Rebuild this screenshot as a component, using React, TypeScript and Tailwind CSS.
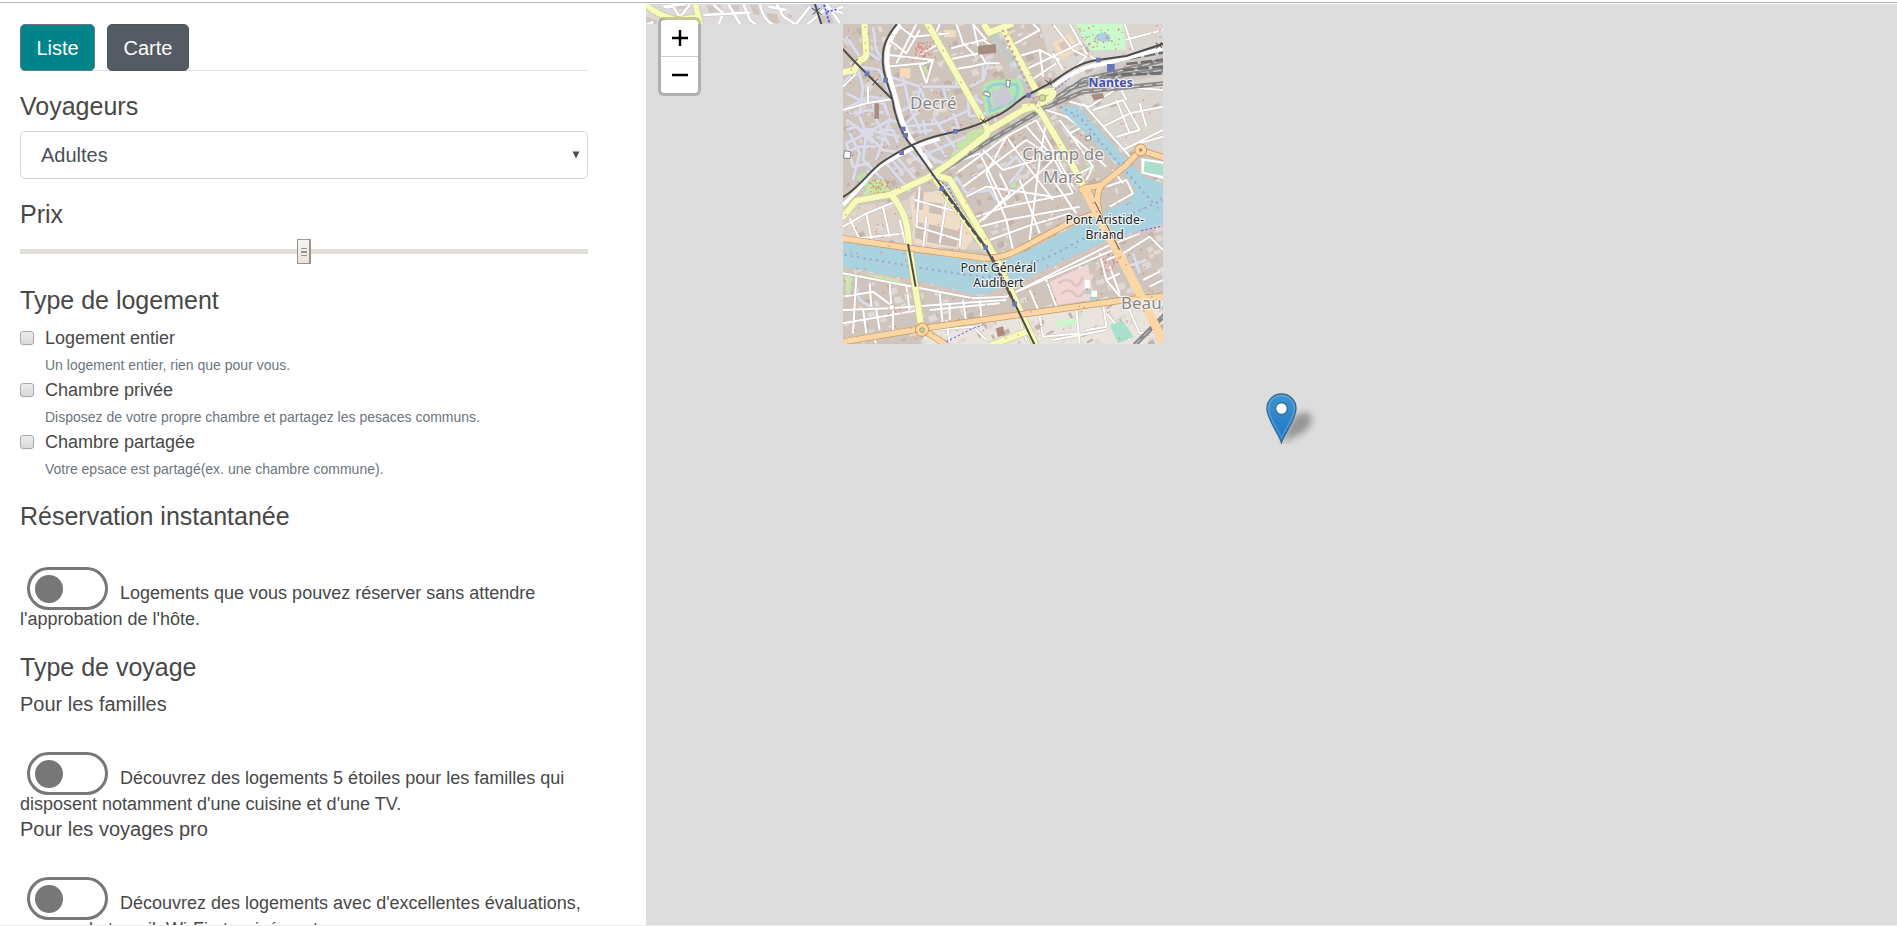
import { useState, type ReactNode } from "react";

type Point = [number, number];

const lodgingTypes = [
  { id: "entier", label: "Logement entier", help: "Un logement entier, rien que pour vous." },
  {
    id: "privee",
    label: "Chambre privée",
    help: "Disposez de votre propre chambre et partagez les pesaces communs.",
  },
  {
    id: "partagee",
    label: "Chambre partagée",
    help: "Votre epsace est partagé(ex. une chambre commune).",
  },
];

function SectionTitle({ children }: { children: ReactNode }) {
  return <h2 className="text-[25px] leading-[30px]">{children}</h2>;
}

function Toggle({ id, children }: { id: string; children: ReactNode }) {
  return (
    <p className="pt-9 text-lg/[26px]">
      <input
        id={id}
        type="checkbox"
        role="switch"
        className="mr-3 -mb-1 ml-[7px] inline-block h-[43px] w-[81px] appearance-none rounded-full border-3 border-[#777] bg-white p-[5px] align-[-7px] before:block before:size-7 before:rounded-full before:bg-[#777] checked:before:ml-auto"
      />
      <label htmlFor={id}>{children}</label>
    </p>
  );
}

/* ---------- Map drawing ---------- */

function seeded(seed: number) {
  let s = seed;
  return () => {
    s = (s * 16807) % 2147483647;
    return s / 2147483647;
  };
}

const random = seeded(4242);
const scatter = (n: number): Point[] =>
  Array.from({ length: n }, () => [10 + random() * 960, 12 + random() * 960]);

const courtyards = scatter(620);
const trees = scatter(300);

const oldTownStreets = [
  "M10,190 L60,140 L120,150 L160,240 L90,230 L10,270",
  "M50,130 L70,200 L60,290 L80,340 L70,420 L130,480",
  "M20,300 L80,340 L150,300 L190,310 M80,340 L20,370 L40,440 L90,430",
  "M80,340 L130,390 L200,400 M100,250 L110,300 L150,380 M130,240 L150,300 L110,420",
  "M10,400 L60,380 L110,380 M30,340 L60,400 L40,480 M90,330 L180,350",
  "M150,170 L240,200 L230,280 L190,320 M240,200 L380,200 L390,290",
  "M190,320 L300,310 L390,270 M210,260 L240,330 M280,290 L320,350 M340,280 L360,330",
  "M240,200 L260,250 M190,170 L210,260 L170,280 M310,200 L320,240 M350,200 L350,160",
  "M200,390 L260,440 M240,370 L290,430 M280,360 L320,410 M320,350 L360,400",
  "M220,420 L380,350 M250,400 L330,440 M140,430 L200,500 M170,410 L230,480",
  "M390,200 L430,180 L430,130 M390,290 L440,280 M400,230 L430,250",
  "M20,50 L60,110 M100,20 L110,90 L150,150 M90,100 L120,120",
  "M350,470 L380,520 L450,510 L470,540 M490,450 L530,410 L550,440 L510,490",
  "M290,500 L340,500 L350,470 M50,800 L60,840 L110,870 M40,720 L100,760",
  "M880,700 L900,760 M860,740 L920,720 M450,120 L430,180",
  "M20,220 L60,240 L130,250 M30,280 L90,270 L140,280 M20,330 L50,320 L100,370 M120,330 L160,330 L175,370",
  "M150,410 L190,460 M110,350 L140,360 M200,340 L280,330 M250,300 L260,345 M160,200 L200,190",
];

const streets = [
  "M150,60 L200,100 L240,30 M150,105 L280,120 L260,190 M170,12 L220,50 L330,40 M230,12 L170,130 M140,140 L250,130",
  "M280,120 L240,135 L260,190 M300,70 L230,110 M280,60 L300,12 M320,120 L420,100 L400,12 M350,12 L370,70 L410,110",
  "M335,85 L430,60 L460,80 M420,100 L440,130 L390,140 L330,150 M350,150 L370,200 M440,130 L480,130",
  "M10,270 L80,250 L155,238 M10,200 L50,160 M85,200 L85,250 M400,12 L440,60",
  "M500,85 L600,30 M530,110 L600,90 L660,120 M555,150 L680,90 L720,70 M600,90 L610,170 M640,100 L670,150 M575,180 L650,130",
  "M640,12 L700,90 L740,110 M690,12 L740,100 L770,120 M740,110 L700,150 M855,12 L880,90 M600,30 L580,12 M855,60 L970,30",
  "M350,460 L500,350 L590,300 M370,500 L560,360 L650,420 M340,430 L420,400 L500,560 M400,620 L620,440 L660,400",
  "M430,390 L490,450 L590,420 M500,350 L550,420 L640,540 M560,320 L640,410 L700,520 M500,350 L440,460 L500,600 L520,690",
  "M620,300 L600,420 L570,660 M380,530 L440,500 L640,530 M410,590 L500,560 L700,520 M420,620 L500,600 L720,560",
  "M450,660 L560,620 L690,580 M540,480 L600,640 M590,300 L700,500 M640,480 L710,580 M480,460 L510,520 L430,600",
  "M660,300 L690,340 L760,440 L700,470 M690,340 L730,320 M620,270 L680,290 L760,350 L830,430 M700,350 L800,440",
  "M730,250 L800,330 L880,420 M760,270 L850,240 L900,330 L830,350 M790,320 L870,280 L970,260 M850,390 L970,330 M900,370 L970,350",
  "M690,245 L750,260 L840,200 L970,210 M830,240 L870,340 M900,250 L920,320 M840,200 L860,240",
  "M10,620 L80,580 L180,540 M30,595 L60,660 M80,580 L100,680 M130,560 L150,650 M60,655 L200,640 M180,600 L200,680",
  "M240,500 L230,620 L360,660 M225,540 L370,580 M260,590 L250,690 M320,540 L300,670 M370,580 L360,680",
  "M10,760 L220,800 L400,835 L500,830 L800,680 L900,640 M10,830 L100,815 L160,860 L160,940 M10,910 L240,870",
  "M10,870 L150,865 L420,845 L500,840 M150,790 L155,860 M50,770 L40,940 M90,790 L95,860 M110,870 L120,930 M200,800 L210,870",
  "M300,820 L310,920 M270,870 L480,850 M420,840 L425,890 M330,850 L330,900 M370,840 L380,910 M70,865 L80,940",
  "M570,810 L600,880 M520,820 L820,690 M620,780 L650,860 M720,740 L760,850 M780,700 L800,780 L850,840 M800,780 L840,760",
  "M800,720 L850,700 L890,790 M850,700 L930,650 L970,690 M930,800 L970,780 M910,780 L970,750 M810,740 L840,820",
  "M540,900 L560,960 M600,890 L610,950 L720,940 M710,870 L720,970 M790,850 L800,920 L740,930 M800,880 L870,960 M640,960 L800,930",
  "M280,930 L400,920 L440,960 M320,900 L330,970 M100,950 L110,970 M860,850 L900,940 L960,930",
  "M800,500 L860,480 L880,520 L810,560 M820,450 L850,490 M740,480 L760,440",
];

const yellowRoads = [
  "M74,8 L80,100 Q80,118 60,120 L45,150 L6,158",
  "M262,8 L440,318 L445,335",
  "M432,12 L448,38 L520,10",
  "M6,595 L50,542 L155,523 L270,470 L340,422 L440,345 L445,332 L550,270 L600,255",
  "M155,523 C190,570 205,600 208,680 L245,922",
  "M272,462 L330,478 L472,720 L590,980",
  "M285,475 L440,690",
  "M548,262 Q592,252 606,280 L690,420 L735,505",
  "M485,20 L590,212",
  "M595,218 L640,212 Q645,235 600,250",
  "M448,978 L562,935",
];

const orangeRoads = [
  "M6,655 L240,689 L430,714 C480,718 520,700 570,672 L690,608 L775,578",
  "M720,512 L740,502 L795,622 L900,820 L975,975",
  "M735,505 L785,495 L855,440 L903,390 L975,414",
  "M785,495 C765,530 775,560 782,590",
  "M6,966 L245,926 L540,884 L840,842 L975,828",
  "M245,926 L325,978",
];

const trainLines = [
  "M172,12 C130,60 124,100 132,150 C142,200 158,220 162,260 C176,320 196,360 222,382 L300,492 L437,680 L525,850 L585,975",
  "M8,532 C60,505 90,450 130,425 C180,392 240,360 300,346 C350,335 420,315 460,292 C510,275 530,240 570,222 L640,185 C700,140 740,122 790,118 L860,108 L975,70",
  "M8,86 L46,126 L106,186 L158,238",
  "M205,672 L228,800",
];

const mainRail = [
  "M300,455 L440,368 L590,278",
  "M590,278 L690,205 L850,165 L975,150",
  "M600,272 L730,180 L975,120",
  "M620,262 L730,215 L975,190",
  "M885,975 L975,885",
];

const stops: Point[] = [
  [82, 161], [138, 181], [191, 327], [198, 346], [186, 398], [347, 334],
  [567, 226], [776, 120], [306, 506], [438, 683], [525, 852],
];

const crossings: Point[] = [[46, 126], [106, 186], [430, 303], [627, 188], [958, 76]];

const mapLabels = [
  { text: "Decré", x: 281, y: 266, size: 51, fill: "#868686" },
  { text: "Champ de", x: 670, y: 420, size: 51, fill: "#868686" },
  { text: "Mars", x: 670, y: 488, size: 51, fill: "#868686" },
  { text: "Pont Aristide-", x: 795, y: 613, size: 37, fill: "#252525" },
  { text: "Briand", x: 795, y: 658, size: 37, fill: "#252525" },
  { text: "Pont Général", x: 476, y: 755, size: 37, fill: "#252525" },
  { text: "Audibert", x: 476, y: 800, size: 37, fill: "#252525" },
  { text: "Beau", x: 905, y: 867, size: 51, fill: "#868686" },
];

function Lines({ paths, color, width, dash }: { paths: string[]; color: string; width: number; dash?: string }) {
  return (
    <g fill="none" stroke={color} strokeWidth={width} strokeDasharray={dash} strokeLinejoin="round">
      {paths.map((d) => (
        <path key={d} d={d} />
      ))}
    </g>
  );
}

function CityTile() {
  return (
    <svg viewBox="10 12 960 960" className="absolute top-5 left-[197px] size-80" role="img" aria-label="Nantes">
      <rect x="10" y="12" width="960" height="960" fill="#d0c5bd" />
      <path d="M600,12 L970,12 L970,400 L860,400 L640,150 Z" fill="#dcd6d1" />
      <path d="M250,930 L970,830 L970,972 L250,972 Z" fill="#e9e4dd" />
      <path d="M10,560 L200,540 L240,500 L430,690 L240,680 L10,650 Z" fill="#dcd2ca" />
      <g>
        {courtyards.map(([x, y], i) => (
          <rect
            key={i}
            x={x}
            y={y}
            width={8 + (i % 5) * 4}
            height={6 + (i % 4) * 4}
            transform={`rotate(${-28 + (i % 3) * 4} ${x} ${y})`}
            fill={i % 3 ? "#e0dad6" : "#c1b4aa"}
          />
        ))}
      </g>

      <path d="M212,530 L300,510 L405,650 L375,690 L225,670 Z" fill="#f0ddc9" />
      <path d="M228,510 L252,510 L250,570 L225,568 Z M228,605 L252,610 L250,660 L226,655 Z M268,612 L362,634 L350,682 L262,666 Z M270,545 L310,552 L305,585 L268,578 Z" fill="#cdbfb5" />
      <path d="M640,70 L690,40 L715,85 L665,120 Z" fill="#f4dcc0" />
      <path d="M655,72 L682,56 L700,84 L672,100 Z" fill="#d8c7b8" />
      <path d="M180,145 h32 v30 h-32 z M312,30 h36 v22 h-36 z" fill="#f6dcb8" />

      <path d="M708,12 L852,12 L858,88 L750,92 Z" fill="#c8facc" />
      <path d="M765,52 q20,-24 42,-8 q14,16 -6,22 q-20,4 -36,-14z" fill="#aad3df" />
      <path d="M430,200 q10,-24 50,-20 l60,-4 q18,24 10,50 l-50,40 l-60,24 q-12,-40 -10,-90z" fill="#b4e6b0" />
      <path d="M442,210 q10,-18 40,-18 l50,2 q8,20 -10,50 l-70,30 z" fill="none" stroke="#9bcfd5" strokeWidth="9" />
      <path d="M345,380 Q400,310 445,330 L430,360 L330,420 Z M85,490 L130,470 L150,512 L75,525 Z" fill="#c6e6a9" />
      <path d="M50,470 l25,-12 l20,24 l-20,20z M240,145 l20,-6 l8,18 l-18,8z M510,480 l16,2 l4,18 l-16,4z M735,430 l10,-8 l24,30 l-8,6z" fill="#bfe3b0" />
      <path d="M15,765 L35,765 L32,830 L20,830 Z M60,755 L150,770 L220,800 L150,790 Z" fill="#cbe6b0" />

      <Lines paths={oldTownStreets} color="#c0bdca" width={12} />
      <Lines paths={oldTownStreets} color="#dcdbe8" width={9} />
      <path d="M70,325 l28,0 l4,22 l-26,10 l-12,-16z" fill="#dcdbe8" />
      <Lines paths={streets} color="#c4bdb8" width={9} />
      <Lines paths={streets} color="#ffffff" width={6} />

      <path d="M414,78 L468,72 L470,98 L416,104 Z M104,250 h14 v46 h-14 z M755,225 l34,-6 l5,16 l-32,6 z M470,925 l20,-6 l6,26 l-22,6 z" fill="#a68d80" />
      <path d="M455,208 l18,6 l8,-14 l20,-2 l8,20 l14,14 l-16,12 l-6,16 l-22,-4 l-12,10 l-8,-22 z" fill="#cacad6" />
      <path d="M630,785 L745,733 L764,838 L654,855 Z" fill="#f1d6d5" />
      <path d="M655,790 q30,-20 45,0 t30,-20 M664,822 q26,-20 40,0 t30,-10" fill="none" stroke="#dcc4c0" strokeWidth="7" />
      <path d="M735,780 h16 v25 h-16 z M756,812 h16 v20 h-16 z" fill="#fff" />
      <path d="M736,806 h18 v16 h-18 z M750,830 h20 v14 h-20z" fill="#a8d5cf" />
      <path d="M810,915 L850,903 L882,950 L835,970 Z" fill="#aae0cb" />
      <path d="M648,904 L710,898 L710,914 L650,918 Z" fill="#c8facc" />

      <path
        d="M10,665 L240,700 L430,725 L492,722 L580,685 L760,592 L870,540 L890,510 L840,440 L680,285 L655,258 L715,258 L870,430 L912,468 L970,492 L970,612 L800,662 L560,775 L440,822 L410,825 L220,778 L10,742 Z"
        fill="#aad3df"
      />
      <path d="M905,415 L975,425 L975,478 L905,460 Z" fill="#fff" />
      <path d="M915,422 L970,432 L970,468 L912,456 Z" fill="#aae0cb" />
      <path d="M10,748 L220,785 L400,825 L450,826 L560,782 L800,668 L970,618" fill="none" stroke="#e8c3bd" strokeWidth="4" strokeDasharray="8 5" />
      <path d="M15,705 L240,743 L430,772 L490,762 L640,705 L790,625 L880,580 L970,540 M660,260 L720,290 L820,410 L940,548" fill="none" stroke="#a99bd0" strokeWidth="6" strokeDasharray="6 13" />
      <path d="M455,45 L560,205 M470,40 L575,200" fill="none" stroke="#a6d7e3" strokeWidth="5" strokeDasharray="16 6" />

      <path d="M850,110 L970,85 L970,165 L720,215 L650,245 L740,170 Z" fill="#c9c5c2" opacity=".7" />
      <Lines paths={mainRail} color="#8a8a8a" width={14} />
      <Lines paths={mainRail} color="#dcdcdc" width={3} dash="24 14" />
      <path d="M870,115 L970,98 M860,132 L970,120 M850,150 L970,140 M800,165 L970,160" fill="none" stroke="#6f6f6f" strokeWidth="8" strokeDasharray="34 10" />

      <path d="M182,14 C142,60 138,100 145,150 C155,200 170,230 176,265 C190,320 210,360 236,385 L275,445" fill="none" stroke="#fff" strokeWidth="14" />
      <path d="M10,555 C70,500 90,455 130,432 C180,402 240,372 300,356 M640,200 C700,155 740,138 800,130 L970,86" fill="none" stroke="#fff" strokeWidth="12" />

      <Lines paths={yellowRoads} color="#c9cc8f" width={22} />
      <Lines paths={yellowRoads} color="#f6fabb" width={18} />
      <Lines paths={orangeRoads} color="#c89a5c" width={20} />
      <Lines paths={orangeRoads} color="#fcd6a4" width={16} />
      <path d="M735,505 L795,622 L900,820 L975,975" fill="none" stroke="#fcd6a4" strokeWidth="26" />
      <circle cx="247" cy="929" r="20" fill="#fcd6a4" stroke="#c89a5c" strokeWidth="3" />
      <circle cx="247" cy="930" r="7" fill="#b9dd9d" stroke="#a47a3e" strokeWidth="2" />
      <circle cx="903" cy="390" r="18" fill="#fcd6a4" stroke="#c89a5c" strokeWidth="3" />
      <circle cx="903" cy="390" r="5" fill="#b08b50" />
      <circle cx="608" cy="234" r="10" fill="#c8d9a0" stroke="#a9ab62" strokeWidth="3" />
      <circle cx="156" cy="862" r="9" fill="#fff" stroke="#bbb" strokeWidth="3" />

      <path d="M488,30 L596,265" fill="none" stroke="#c99bb4" strokeWidth="7" strokeDasharray="7 10" />
      <Lines paths={trainLines} color="#4c4c4c" width={6} />
      <path d="M310,510 L436,680 M455,710 L525,850" fill="none" stroke="#555" strokeWidth="9" strokeDasharray="22 7" />
      <path d="M765,545 L840,690" fill="none" stroke="#555" strokeWidth="3" />
      <path d="M275,465 L325,500 L370,590 M320,965 L400,925 L430,915 M905,632 L970,618 M645,210 L690,175" fill="none" stroke="#4a4aff" strokeWidth="3" strokeDasharray="6 7" />

      <g fill="#f2564c" opacity=".6">
        {trees.map(([x, y], i) => (
          <rect key={i} x={x} y={y} width="4" height="4" />
        ))}
        {trees.slice(0, 50).map(([x, y], i) => (
          <rect key={i} x={225 + (x % 50)} y={65 + (y % 45)} width="4" height="4" />
        ))}
        {trees.slice(70, 110).map(([x, y], i) => (
          <rect key={i} x={85 + (x % 60)} y={475 + (y % 45)} width="4" height="4" />
        ))}
        {trees.slice(120, 165).map(([x, y], i) => (
          <rect key={i} x={715 + (x % 135)} y={15 + (y % 72)} width="4" height="4" />
        ))}
        {trees.slice(180, 205).map(([x, y], i) => (
          <rect key={i} x={780 + (x % 60)} y={700 + (y % 50)} width="4" height="4" />
        ))}
      </g>

      <g stroke="#4c4c4c" strokeWidth="3">
        {crossings.map(([x, y]) => (
          <path key={x} d={`M${x - 10},${y - 8} l20,16 M${x - 8},${y + 10} l16,-20`} />
        ))}
      </g>
      <g fill="#6a76b8">
        {stops.map(([x, y]) => (
          <rect key={`${x}-${y}`} x={x - 7} y={y - 7} width="14" height="14" />
        ))}
        <rect x="802" y="132" width="23" height="23" />
      </g>
      <path
        d="M14,392 l20,4 l-3,20 l-19,-2z M434,214 l18,6 l-2,10 l-18,-6z M500,180 l12,2 l-3,20 l-10,-3z M738,350 l14,-3 l2,12 l-14,2z"
        fill="#fff"
        stroke="#555"
        strokeWidth="2"
      />

      <g
        textAnchor="middle"
        stroke="#fff"
        strokeOpacity=".75"
        strokeWidth="7"
        strokeLinejoin="round"
        paintOrder="stroke"
        className="font-['Noto_Sans',sans-serif]"
      >
        {mapLabels.map((l) => (
          <text key={l.text} x={l.x} y={l.y} fontSize={l.size} fill={l.fill}>
            {l.text}
          </text>
        ))}
        <text x="813" y="201" fontSize="37" fontWeight="700" fill="#4750b0">
          Nantes
        </text>
      </g>
    </svg>
  );
}

function NorthStrip() {
  const yellow = ["M18,14 Q50,45 110,60 L180,50", "M165,8 L182,75"];
  const white = [
    "M70,20 L140,12 M95,12 L130,70 M190,45 L330,38 M220,14 L250,40 L235,75 M265,12 L300,72 M310,12 L330,60 L350,75",
    "M360,12 Q370,60 400,75 M410,12 L430,50 L470,75 M385,20 L440,30 M470,70 L510,20 M500,75 L560,25 L610,40 M560,12 L600,70",
    "M18,75 L40,66 M110,60 L130,40 L150,12 M580,30 L610,20",
  ];
  return (
    <svg viewBox="18 12 591 60" className="absolute top-0 left-0 h-5 w-[197px]" aria-hidden="true">
      <rect x="18" y="12" width="591" height="60" fill="#dcdada" />
      <path d="M90,12 h60 v14 h-60z M200,18 l40,-4 l8,18 l-40,6z M270,16 h28 v16 h-28z M380,38 l30,4 l10,28 h-30z M540,50 l30,-8 l10,28 h-36z M330,14 h22 l8,30 h-18z M20,50 l30,10 v12 h-30z M440,40 l18,6 l-8,14z" fill="#d0c5bd" />
      <path d="M490,12 h70 l-8,24 l-50,-4z" fill="#cfd3e4" />
      <Lines paths={white} color="#c8c2be" width={11} />
      <Lines paths={white} color="#ffffff" width={8} />
      <Lines paths={yellow} color="#c9cc8f" width={21} />
      <Lines paths={yellow} color="#f6fabb" width={17} />
      <path d="M524,10 L545,75" stroke="#4c4c4c" strokeWidth="6" />
      <path d="M515,24 L545,44 M518,44 L540,24" stroke="#4c4c4c" strokeWidth="3" />
      <path d="M552,14 L570,75 M560,36 L590,28" fill="none" stroke="#4a4aff" strokeWidth="5" strokeDasharray="7 5" />
    </svg>
  );
}

function Marker() {
  return (
    <button type="button" aria-label="Logement" className="absolute top-[389px] left-[620px] h-[51px] w-[60px]">
      <svg viewBox="0 0 60 51" className="size-full" aria-hidden="true">
        <defs>
          <linearGradient id="pin" x1="0" y1="0" x2="0" y2="1">
            <stop offset="0" stopColor="#3f95d0" />
            <stop offset="1" stopColor="#1d73c4" />
          </linearGradient>
          <filter id="soft" x="-50%" y="-50%" width="200%" height="200%">
            <feGaussianBlur stdDeviation="3.500" />
          </filter>
        </defs>
        <path d="M16,50 L24,28 Q34,16 44,21 Q49,30 38,39 Z" fill="#000" opacity=".32" filter="url(#soft)" />
        <path
          d="M15.500,49.500 C13.500,42 1,26 1,15.500 A14.500,14.500 0 0 1 30,15.500 C30,26 17.500,42 15.500,49.500 Z"
          fill="url(#pin)"
          stroke="#2e6c97"
          strokeWidth="1.400"
        />
        <path
          d="M15.500,45 C12.500,37 2.500,25 2.500,15.500 A13,13 0 0 1 28.500,15.500 C28.500,25 18.500,37 15.500,45 Z"
          fill="none"
          stroke="#fff"
          strokeOpacity=".2"
          strokeWidth="1.500"
        />
        <circle cx="15.500" cy="15.500" r="5.800" fill="#fff" stroke="#2e6c97" strokeWidth="1.200" />
      </svg>
    </button>
  );
}

function MapPane() {
  return (
    <section aria-label="Carte des logements" className="relative overflow-hidden bg-[#ddd]">
      <NorthStrip />
      <CityTile />
      <Marker />
      <div className="absolute top-[13px] left-3 flex w-[43px] flex-col overflow-hidden rounded-md border-3 border-black/20 bg-white bg-clip-padding">
        <button type="button" aria-label="Zoom avant" className="grid h-[37px] place-items-center border-b border-[#ccc]">
          <svg viewBox="0 0 16 16" className="size-4" aria-hidden="true">
            <path d="M0,8 H16 M8,0 V16" stroke="#000" strokeWidth="2.400" />
          </svg>
        </button>
        <button type="button" aria-label="Zoom arrière" className="grid h-9 place-items-center">
          <svg viewBox="0 0 16 16" className="size-4" aria-hidden="true">
            <path d="M0,8 H16" stroke="#000" strokeWidth="2.400" />
          </svg>
        </button>
      </div>
    </section>
  );
}

export default function App() {
  const [price, setPrice] = useState(50);

  return (
    <div className="flex h-screen flex-col overflow-hidden border-b border-[#eee] bg-white pt-0.5 font-['Liberation_Sans',Arial,sans-serif] text-[#484848]">
      <div className="mb-px h-px shrink-0 bg-[#b0b4b6]" />
      <main className="grid min-h-0 flex-1 grid-cols-[646fr_1251fr]">
        <form className="overflow-hidden pt-5 pr-[58px] pl-5">
          <nav className="flex h-[47px] gap-3 border-b border-[#dee2e6] text-xl text-white">
            <button type="button" className="h-[47px] w-[75px] shrink-0 rounded-[5px] border border-[#6c757d] bg-[#008489]">
              Liste
            </button>
            <button type="button" className="h-[47px] w-[82px] shrink-0 rounded-[5px] border border-[#4e555b] bg-[#545b62]">
              Carte
            </button>
          </nav>

          <section className="mt-5">
            <SectionTitle>
              <label htmlFor="voyageurs">Voyageurs</label>
            </SectionTitle>
            <div className="relative mt-2.5">
              <select
                id="voyageurs"
                className="block h-12 w-full appearance-none rounded-[5px] border border-[#ced4da] bg-white px-5 text-xl text-[#495057]"
              >
                <option>Adultes</option>
                <option>Enfants</option>
              </select>
              <svg viewBox="0 0 8 8" className="pointer-events-none absolute top-5 right-2 size-2" aria-hidden="true">
                <path d="M0.500,0.500 H7.500 L4,7.500 Z" fill="#495057" />
              </svg>
            </div>
          </section>

          <section className="mt-5">
            <SectionTitle>
              <label htmlFor="prix">Prix</label>
            </SectionTitle>
            <input
              id="prix"
              type="range"
              value={price}
              onChange={(e) => setPrice(Number(e.target.value))}
              className="mt-2.5 block h-[25px] w-full appearance-none bg-[linear-gradient(#e2ded8,#e2ded8)] bg-[length:100%_5px] bg-center bg-no-repeat [&::-webkit-slider-thumb]:h-[25px] [&::-webkit-slider-thumb]:w-3.5 [&::-webkit-slider-thumb]:appearance-none [&::-webkit-slider-thumb]:border [&::-webkit-slider-thumb]:border-r-2 [&::-webkit-slider-thumb]:border-[#9c948c] [&::-webkit-slider-thumb]:bg-[linear-gradient(#9c948c,#9c948c),linear-gradient(#9c948c,#9c948c),linear-gradient(#9c948c,#9c948c),linear-gradient(#f6f4f2,#e8e3de)] [&::-webkit-slider-thumb]:bg-[length:6px_1px,6px_2px,6px_1px,100%_100%] [&::-webkit-slider-thumb]:bg-[position:3px_8px,3px_11px,3px_15px,0_0] [&::-webkit-slider-thumb]:bg-no-repeat"
            />
          </section>

          <section className="mt-[21px]">
            <SectionTitle>Type de logement</SectionTitle>
            <div className="mt-2.5">
              {lodgingTypes.map((type) => (
                <div key={type.id} className="flex gap-[11px]">
                  <input
                    id={type.id}
                    type="checkbox"
                    aria-describedby={`${type.id}-aide`}
                    className="mt-1.5 size-3.5 shrink-0 appearance-none rounded-[3px] border border-[#aaa] bg-linear-to-b from-[#ededed] to-[#d8d8d8] shadow-xs checked:bg-[#777]"
                  />
                  <div>
                    <label htmlFor={type.id} className="block text-lg/[26px]">
                      {type.label}
                    </label>
                    <p id={`${type.id}-aide`} className="pt-0.5 text-sm/6 text-[#6c757d]">
                      {type.help}
                    </p>
                  </div>
                </div>
              ))}
            </div>
          </section>

          <section className="mt-5">
            <SectionTitle>Réservation instantanée</SectionTitle>
            <Toggle id="instantanee">Logements que vous pouvez réserver sans attendre l'approbation de l'hôte.</Toggle>
          </section>

          <section className="mt-5">
            <SectionTitle>Type de voyage</SectionTitle>
            <h3 className="mt-2.5 text-xl/6">Pour les familles</h3>
            <Toggle id="familles">
              Découvrez des logements 5 étoiles pour les familles qui disposent notamment d'une cuisine et d'une TV.
            </Toggle>
            <h3 className="text-xl/6">Pour les voyages pro</h3>
            <Toggle id="pro">
              Découvrez des logements avec d'excellentes évaluations, espace de travail, Wi-Fi et arrivée autonome.
            </Toggle>
          </section>
        </form>
        <MapPane />
      </main>
    </div>
  );
}
